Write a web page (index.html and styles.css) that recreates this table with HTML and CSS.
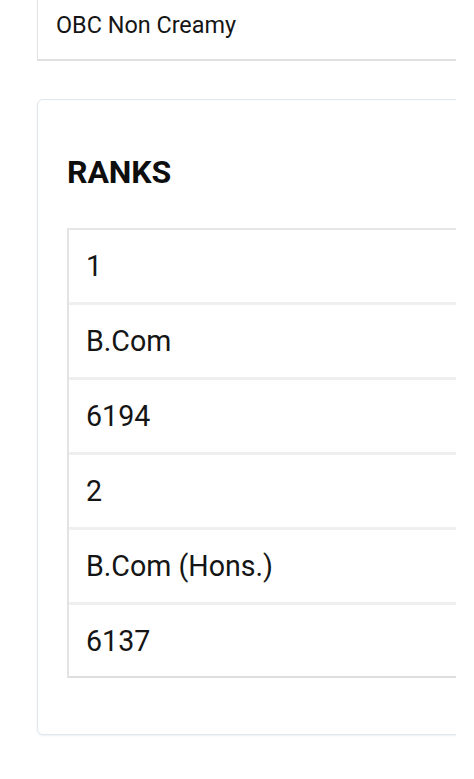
FILE: index.html
```html
<!DOCTYPE html>
<html lang="en">
<head>
<meta charset="utf-8">
<title>Ranks</title>
<link rel="stylesheet" href="styles.css">
</head>
<body>
<div class="viewport">
  <div class="category-box">OBC Non Creamy</div>
  <div class="card">
    <h2 class="card-title">RANKS</h2>
    <div class="rank-table">
      <div class="rank-row">1</div>
      <div class="rank-row">B.Com</div>
      <div class="rank-row">6194</div>
      <div class="rank-row">2</div>
      <div class="rank-row">B.Com (Hons.)</div>
      <div class="rank-row">6137</div>
    </div>
  </div>
</div>
</body>
</html>
```

FILE: styles.css
```css
html, body {
  margin: 0;
  padding: 0;
  background: #ffffff;
}

body {
  font-family: Roboto, "Liberation Sans", Arial, sans-serif;
  color: #151515;
}

.viewport {
  width: 456px;
  height: 779px;
  overflow: hidden;
}

.category-box {
  margin-left: 37px;
  width: 520px;
  box-sizing: border-box;
  height: 61px;
  padding: 12px 0 0 18px;
  font-size: 23.4px;
  line-height: 27px;
  border-left: 1px solid #e2e2e2;
  border-bottom: 2px solid #e0e0e0;
}

.card {
  margin: 38px 0 0 37px;
  width: 520px;
  box-sizing: border-box;
  border: 1.5px solid #dfe6ed;
  border-radius: 6px;
  padding: 53px 0 56px 29px;
  box-shadow: 0 1px 2px rgba(180, 195, 210, 0.25);
}

.card-title {
  margin: 0 0 37px 0;
  font-size: 32px;
  line-height: 38px;
  font-weight: 700;
  letter-spacing: -0.1px;
  color: #0e0e0e;
}

.rank-table {
  border-left: 2px solid #e3e3e3;
  border-top: 2px solid #e6e6e6;
}

.rank-row {
  height: 72px;
  display: flex;
  align-items: center;
  padding-left: 17px;
  font-size: 28.6px;
  color: #151515;
  border-bottom: 3px solid #efefef;
}

.rank-row:last-child {
  height: 71px;
  border-bottom: 2px solid #dedede;
}
```
